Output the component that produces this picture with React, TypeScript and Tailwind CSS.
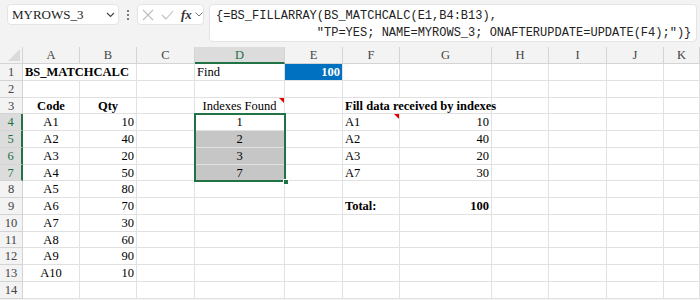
import React from 'react';

type Cell = {
  t: string;
  a?: 'l' | 'c' | 'r';
  b?: boolean;
  bg?: string;
  white?: boolean;
  over?: boolean;
  note?: boolean;
};

const COLS = ['A', 'B', 'C', 'D', 'E', 'F', 'G', 'H', 'I', 'J', 'K'];

const data: Record<string, Cell> = {
  A1: { t: 'BS_MATCHCALC', b: true, over: true },
  D1: { t: 'Find' },
  E1: { t: '100', a: 'r', b: true, white: true, bg: 'blue' },
  A3: { t: 'Code', a: 'c', b: true },
  B3: { t: 'Qty', a: 'c', b: true },
  D3: { t: 'Indexes Found', a: 'c', note: true },
  F3: { t: 'Fill data received by indexes', b: true, over: true },
  D4: { t: '1', a: 'c' },
  D5: { t: '2', a: 'c', bg: 'sel' },
  D6: { t: '3', a: 'c', bg: 'sel' },
  D7: { t: '7', a: 'c', bg: 'sel' },
  F4: { t: 'A1', note: true },
  F5: { t: 'A2' },
  F6: { t: 'A3' },
  F7: { t: 'A7' },
  G4: { t: '10', a: 'r' },
  G5: { t: '40', a: 'r' },
  G6: { t: '20', a: 'r' },
  G7: { t: '30', a: 'r' },
  F9: { t: 'Total:', b: true },
  G9: { t: '100', a: 'r', b: true },
};

const qty = [10, 40, 20, 50, 80, 70, 30, 60, 90, 10];
qty.forEach((q, i) => {
  data[`A${i + 4}`] = { t: `A${i + 1}`, a: 'c' };
  data[`B${i + 4}`] = { t: String(q), a: 'r' };
});

const serif = { fontFamily: '"Liberation Serif", "Times New Roman", serif' };

function GridCell({ id }: { id: string }) {
  const c = data[id];
  const align =
    c?.a === 'c' ? 'justify-center' : c?.a === 'r' ? 'justify-end pr-[2px]' : 'justify-start pl-[2px]';
  const bg =
    c?.bg === 'blue' ? 'bg-[#0070c0]' : c?.bg === 'sel' ? 'bg-[#c6c6c6]' : '';
  const border = c?.over ? 'border-b border-b-[#e1e1e1]' : 'border-r border-b border-[#e1e1e1]';
  return (
    <div
      className={`relative flex items-center whitespace-nowrap pt-[1px] text-[12.5px] leading-none ${align} ${bg} ${border} ${
        c?.b ? 'font-bold' : ''
      } ${c?.white ? 'text-white' : 'text-black'} ${c?.over ? 'z-10' : ''}`}
    >
      {c?.t}
      {c?.note && (
        <span className="absolute right-0 top-0 h-0 w-0 border-l-[5px] border-t-[5px] border-l-transparent border-t-[#e00000]" />
      )}
    </div>
  );
}

function App() {
  const ROW_H = 16.75;
  const HEAD_H = 17;
  const selTop = HEAD_H + 3 * ROW_H - 1;
  const selH = 4 * ROW_H + 2;

  return (
    <div className="h-[300px] w-[700px] overflow-hidden bg-[#f3f3f3]" style={serif}>
      {/* formula bar */}
      <div className="flex h-[47px] items-start pt-[4px]">
        <div className="ml-[7px] flex h-[21px] w-[112px] items-center justify-between rounded-[4px] border border-[#e4e4e4] bg-white pl-[4px] pr-[3px]">
          <span className="text-[13px] text-[#222]">MYROWS_3</span>
          <svg width="9" height="6" viewBox="0 0 9 6">
            <path d="M1 1 L4.5 4.5 L8 1" fill="none" stroke="#444" strokeWidth="1.2" />
          </svg>
        </div>
        <div className="flex h-[21px] w-[18px] flex-col items-center justify-center gap-[2px]">
          <span className="h-[2px] w-[2px] rounded-full bg-[#555]" />
          <span className="h-[2px] w-[2px] rounded-full bg-[#555]" />
          <span className="h-[2px] w-[2px] rounded-full bg-[#555]" />
        </div>
        <div className="flex h-[21px] w-[67px] items-center rounded-[4px] border border-[#e4e4e4] bg-white pl-[4px]">
          <svg width="12" height="12" viewBox="0 0 12 12" className="mr-[7px]">
            <path d="M1 1 L11 11 M11 1 L1 11" stroke="#bdbdbd" strokeWidth="1.1" />
          </svg>
          <svg width="13" height="10" viewBox="0 0 13 10" className="mr-[7px]">
            <path d="M1 5 L5 9 L12 1" fill="none" stroke="#bdbdbd" strokeWidth="1.1" />
          </svg>
          <span className="text-[13px] font-bold italic text-[#333]" style={serif}>
            fx
          </span>
          <svg width="8" height="5" viewBox="0 0 8 5" className="ml-[3px]">
            <path d="M0.5 0.5 L4 4 L7.5 0.5" fill="none" stroke="#777" strokeWidth="1" />
          </svg>
        </div>
        <div
          className="ml-[5px] h-[38px] w-[488px] rounded-[4px] border border-[#e4e4e4] bg-white pl-[6px] pt-[3px] text-[12px] leading-[17px] text-[#222]"
          style={{ fontFamily: '"Liberation Mono", "DejaVu Sans Mono", monospace' }}
        >
          <div className="whitespace-pre">{'{=BS_FILLARRAY(BS_MATCHCALC(E1,B4:B13),'}</div>
          <div className="whitespace-pre">{'              "TP=YES; NAME=MYROWS_3; ONAFTERUPDATE=UPDATE(F4);")}'}</div>
        </div>
      </div>

      {/* sheet */}
      <div className="relative grid grid-cols-[23px_57px_57px_58px_90px_58px_57px_92px_57px_58px_57px_1fr] grid-rows-[17px_repeat(14,16.75px)] bg-white">
        {/* corner */}
        <div className="relative border-b border-r border-[#d4d4d4] bg-[#f3f3f3]">
          <svg width="12" height="12" viewBox="0 0 12 12" className="absolute bottom-[2px] right-[2px]">
            <polygon points="12,0 12,12 0,12" fill="#dadada" />
          </svg>
        </div>
        {COLS.map((c) =>
          c === 'D' ? (
            <div
              key={c}
              className="flex items-center justify-center border-b-2 border-r border-b-[#217346] border-r-[#d4d4d4] bg-[#dcdcdc] pt-[1px] text-[12.5px] text-[#1e7145]"
            >
              {c}
            </div>
          ) : (
            <div
              key={c}
              className="flex items-center justify-center border-b border-r border-[#d4d4d4] bg-[#f3f3f3] pt-[1px] text-[12.5px] text-[#444]"
            >
              {c}
            </div>
          )
        )}
        {Array.from({ length: 14 }, (_, i) => i + 1).map((r) => {
          const sel = r >= 4 && r <= 7;
          return (
            <React.Fragment key={r}>
              <div
                className={`flex items-center justify-center border-b pt-[1px] text-[12.5px] ${
                  sel
                    ? 'border-r-2 border-b-[#d4d4d4] border-r-[#217346] bg-[#dcdcdc] text-[#1e7145]'
                    : 'border-r border-[#d4d4d4] bg-[#f3f3f3] text-[#444]'
                }`}
              >
                {r}
              </div>
              {COLS.map((c) => (
                <GridCell key={c} id={`${c}${r}`} />
              ))}
            </React.Fragment>
          );
        })}

        {/* selection overlay */}
        <div
          className="pointer-events-none absolute z-20 border-2 border-[#217346]"
          style={{ left: 194, top: selTop, width: 92, height: selH }}
        />
        <div
          className="pointer-events-none absolute z-30 h-[6px] w-[6px] border border-white bg-[#217346]"
          style={{ left: 283, top: selTop + selH - 3 }}
        />
      </div>
    </div>
  );
}

export default App;
